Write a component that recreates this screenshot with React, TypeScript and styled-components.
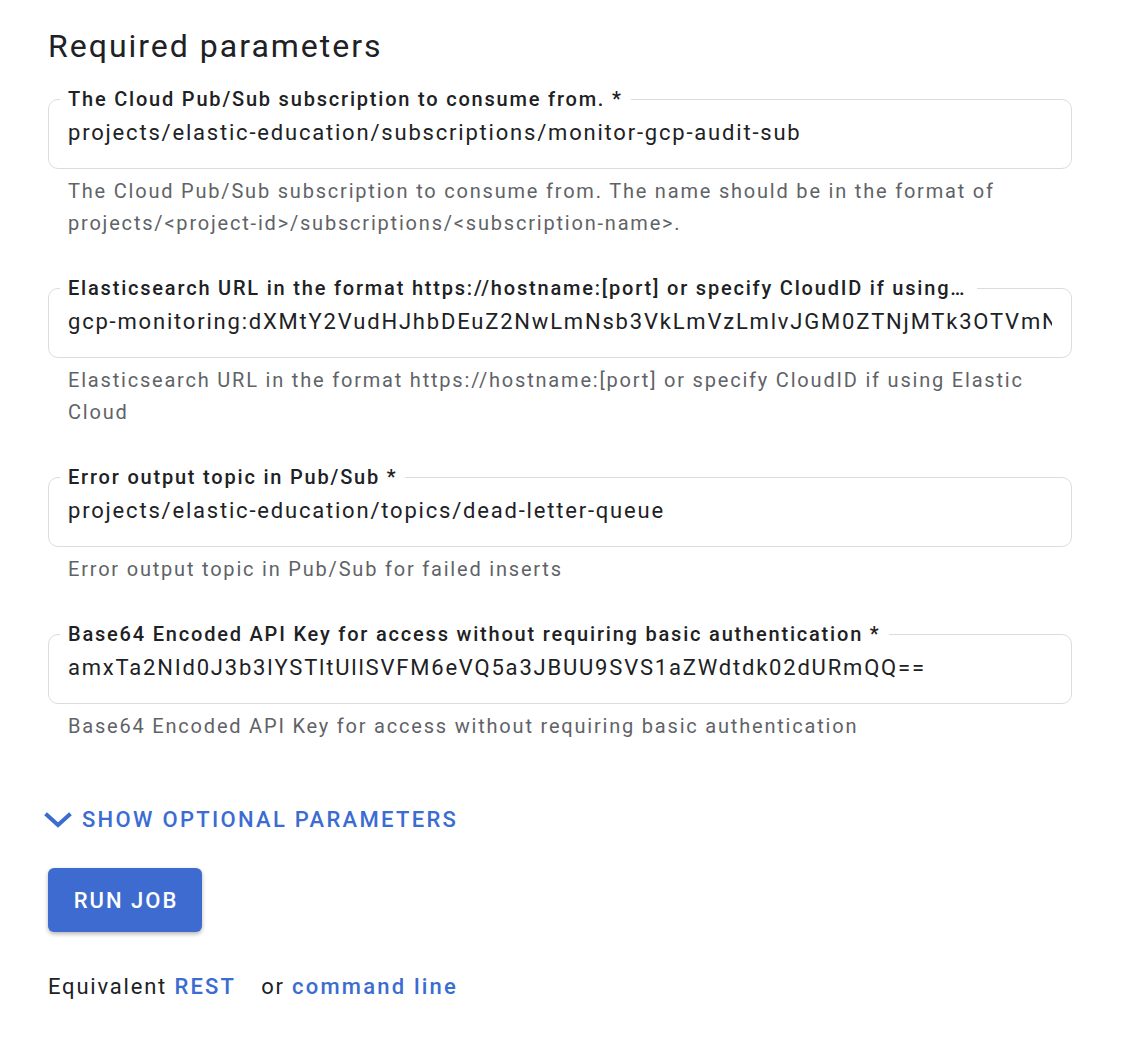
import React from 'react';
import styled, { createGlobalStyle } from 'styled-components';

const GlobalStyle = createGlobalStyle`
  body {
    margin: 0;
    background: #ffffff;
    font-family: Roboto, "Liberation Sans", Arial, sans-serif;
    color: #202124;
    letter-spacing: 1.8px;
  }
`;

const Page = styled.div`
  padding: 26px 54px 40px 48px;
  width: 1024px;
`;

const Title = styled.h2`
  margin: 0 0 21px;
  font-size: 32px;
  line-height: 40px;
  font-weight: 400;
  letter-spacing: 2px;
  color: #202124;
`;

const Field = styled.div`
  margin-bottom: 37px;
`;

const Box = styled.fieldset`
  margin: 0;
  padding: 0 19px 21px;
  border: 1px solid #dadce0;
  border-radius: 10px;
  min-width: 0;
`;

const Legend = styled.legend`
  display: block;
  margin-left: -8px;
  padding: 0 8px;
  max-width: calc(100% - 67px);
  box-sizing: border-box;
  font-size: 20px;
  line-height: 24px;
  font-weight: 500;
  color: #202124;
  white-space: nowrap;
  overflow: hidden;
  text-overflow: ellipsis;
`;

const Value = styled.input`
  display: block;
  width: 100%;
  margin-top: 8px;
  padding: 0;
  border: none;
  outline: none;
  background: transparent;
  font-family: inherit;
  font-size: 22px;
  letter-spacing: inherit;
  line-height: 28px;
  height: 28px;
  color: #202124;
`;

const Helper = styled.div`
  margin-top: 6px;
  padding: 0 20px;
  font-size: 20px;
  line-height: 32px;
  color: #5f6368;
`;

const Toggle = styled.button`
  display: flex;
  align-items: center;
  gap: 10px;
  margin: 63px 0 0 -4px;
  padding: 0;
  border: none;
  background: none;
  font-family: inherit;
  font-size: 22px;
  line-height: 30px;
  font-weight: 500;
  letter-spacing: 2.3px;
  color: #3b6cd1;
  cursor: pointer;
`;

const RunButton = styled.button`
  display: block;
  margin-top: 33px;
  width: 154px;
  height: 64px;
  border: none;
  border-radius: 6px;
  background: #3d6bd0;
  box-shadow: 0 2px 4px rgba(0, 0, 0, 0.3);
  color: #ffffff;
  font-family: inherit;
  font-size: 22px;
  font-weight: 500;
  letter-spacing: 2px;
  padding: 0 0 0 2px;
`;

const Footer = styled.div`
  margin-top: 40px;
  font-size: 22px;
  line-height: 30px;
  color: #202124;
`;

const LinkText = styled.a<{ $gap?: number }>`
  color: #3b6cd1;
  font-weight: 500;
  letter-spacing: 2.2px;
  text-decoration: none;
  margin-right: ${p => p.$gap ?? 0}px;
`;

const fields = [
  {
    label: 'The Cloud Pub/Sub subscription to consume from. *',
    value: 'projects/elastic-education/subscriptions/monitor-gcp-audit-sub',
    help: 'The Cloud Pub/Sub subscription to consume from. The name should be in the format of projects/<project-id>/subscriptions/<subscription-name>.',
  },
  {
    label:
      'Elasticsearch URL in the format https://hostname:[port] or specify CloudID if using Elastic Cloud *',
    value:
      'gcp-monitoring:dXMtY2VudHJhbDEuZ2NwLmNsb3VkLmVzLmlvJGM0ZTNjMTk3OTVmNDc0YWE0NTE2',
    help: 'Elasticsearch URL in the format https://hostname:[port] or specify CloudID if using Elastic Cloud',
  },
  {
    label: 'Error output topic in Pub/Sub *',
    value: 'projects/elastic-education/topics/dead-letter-queue',
    help: 'Error output topic in Pub/Sub for failed inserts',
  },
  {
    label: 'Base64 Encoded API Key for access without requiring basic authentication *',
    value: 'amxTa2NId0J3b3lYSTltUllSVFM6eVQ5a3JBUU9SVS1aZWdtdk02dURmQQ==',
    help: 'Base64 Encoded API Key for access without requiring basic authentication',
  },
];

const Chevron = () => (
  <svg width="28" height="16" viewBox="0 0 28 16">
    <polyline
      points="3,3 14,13 25,3"
      fill="none"
      stroke="#3b6cd1"
      strokeWidth="4"
      strokeLinecap="square"
    />
  </svg>
);

export default function App() {
  return (
    <Page>
      <GlobalStyle />
      <Title>Required parameters</Title>
      {fields.map(f => (
        <Field key={f.label}>
          <Box>
            <Legend>{f.label}</Legend>
            <Value readOnly value={f.value} />
          </Box>
          <Helper>{f.help}</Helper>
        </Field>
      ))}
      <Toggle>
        <Chevron />
        SHOW OPTIONAL PARAMETERS
      </Toggle>
      <RunButton>RUN JOB</RunButton>
      <Footer>
        Equivalent <LinkText href="#" $gap={25}>REST</LinkText>or{' '}
        <LinkText href="#">command line</LinkText>
      </Footer>
    </Page>
  );
}
